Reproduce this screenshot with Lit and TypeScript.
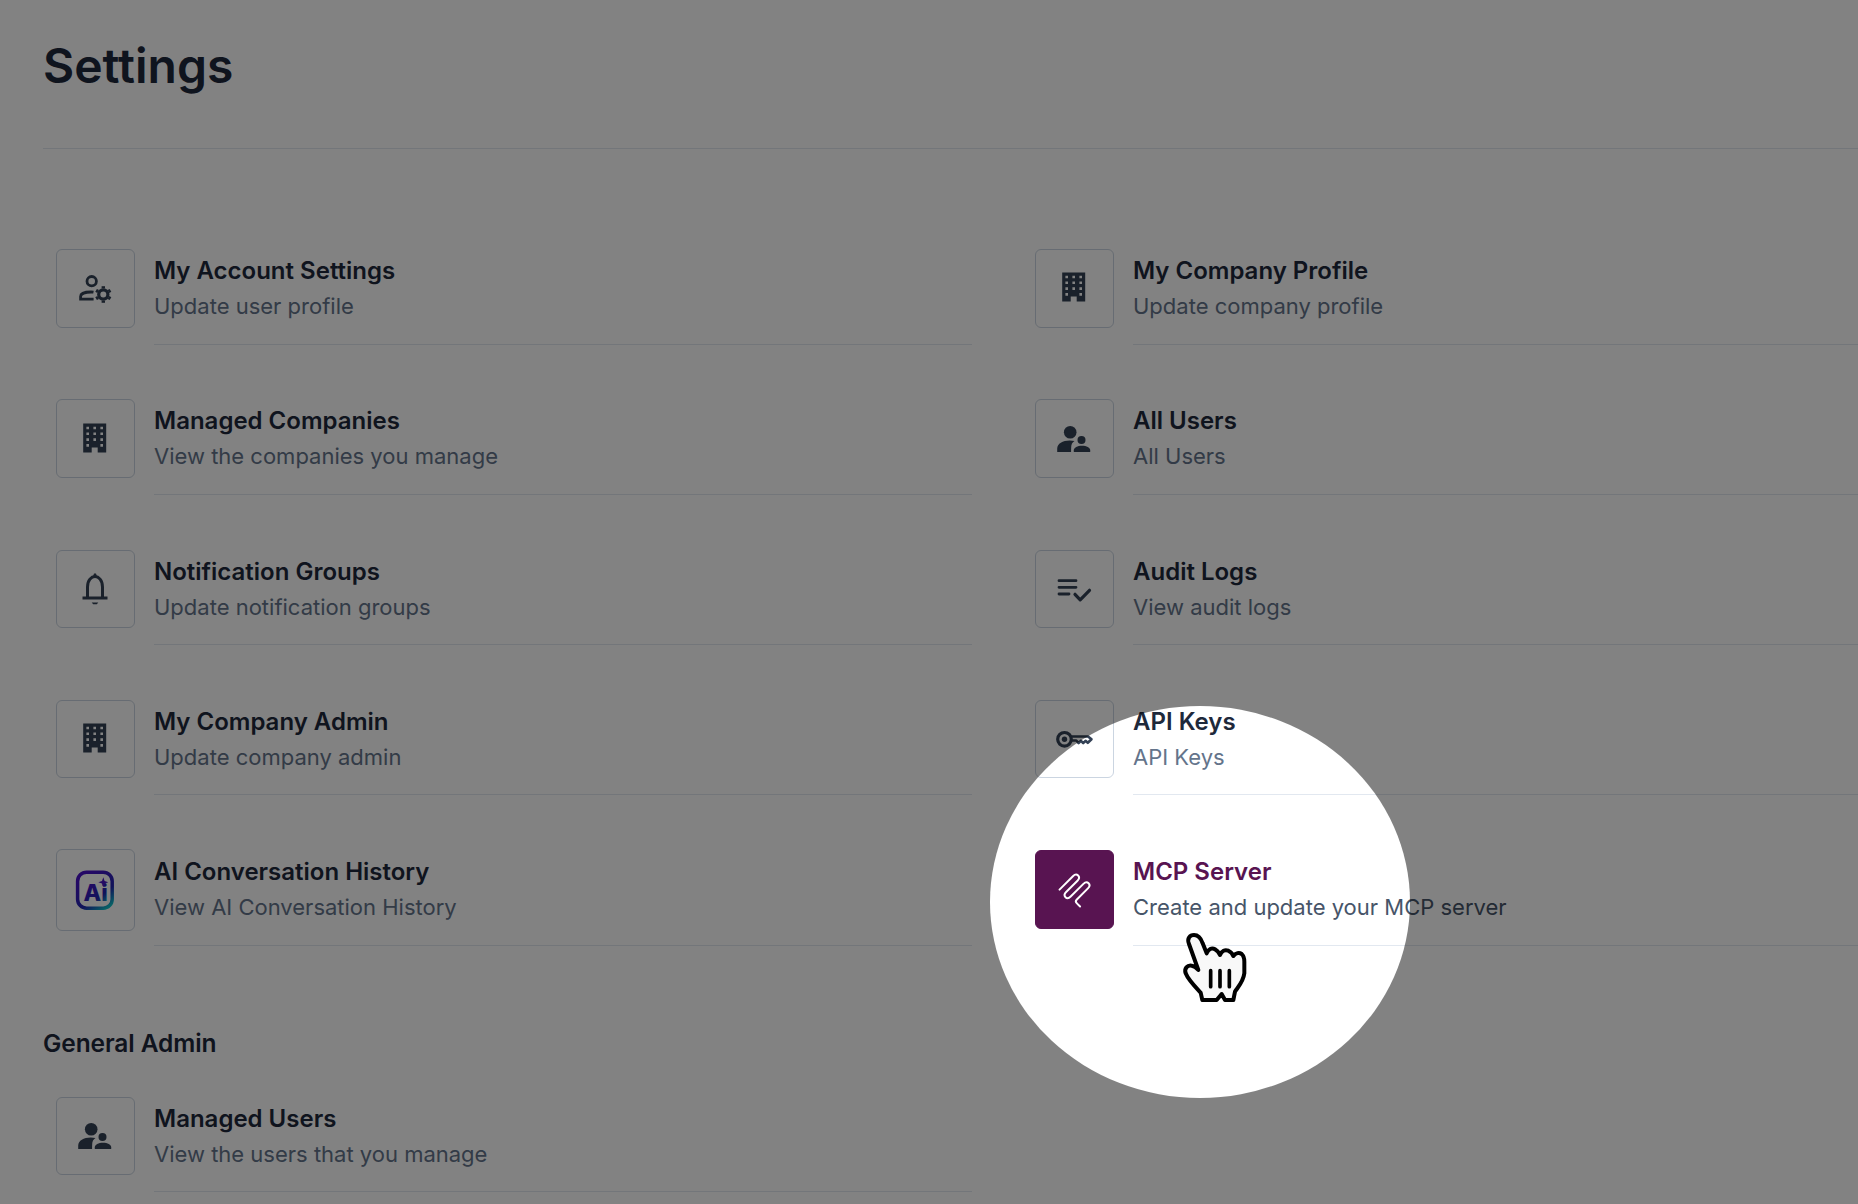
import { LitElement, html, css, svg } from "lit";
import { customElement } from "lit/decorators.js";

const ink = "#334155";

const gearTeeth = [0, 60, 120, 180, 240, 300];

const icons = {
  userGear: svg`
    <circle cx="16.700" cy="13.200" r="4.700" fill="none" stroke=${ink} stroke-width="2.800"/>
    <path d="M18.500 24.200c-1-.2-1.500-.2-2.500-.2-5.500 0-10.400 1.500-10.400 4.500v2.700h13" fill="none" stroke=${ink} stroke-width="2.800"/>
    <circle cx="28.300" cy="26.500" r="4.600" fill="none" stroke=${ink} stroke-width="3.200"/>
    ${gearTeeth.map(
      (a) => svg`<path d="M28.300 20.500v-2.300" stroke=${ink} stroke-width="3.400" transform="rotate(${a} 28.300 26.500)"/>`
    )}`,
  building: svg`
    <path fill-rule="evenodd" fill=${ink} d="M8.200 4.500h23v29h-8.500v-5h-6v5h-8.500zM11.400 7.700v2.600h2.600v-2.600zM18.400 7.700v2.600h2.600v-2.600zM25.400 7.700v2.600h2.600v-2.600zM11.400 13.500v2.600h2.600v-2.600zM18.400 13.500v2.600h2.600v-2.600zM25.400 13.500v2.600h2.600v-2.600zM11.400 19.300v2.600h2.600v-2.600zM18.400 19.300v2.600h2.600v-2.600zM25.400 19.300v2.600h2.600v-2.600zM11.400 25.100v2.600h2.600v-2.600zM25.400 25.100v2.600h2.600v-2.600z"/>`,
  users: svg`
    <circle cx="16.200" cy="13.300" r="6.300" fill=${ink}/>
    <path fill=${ink} d="M3.200 33v-3.500c0-5 5.500-8 12.500-8 1.800 0 3.400.2 4.800.6-2.300 1.500-3.200 3.500-3.300 5.900-.1 1.700-.1 3.300-.1 5z"/>
    <circle cx="27.500" cy="21" r="4" fill=${ink}/>
    <path fill=${ink} d="M19.800 33v-1.700c0-2.800 3.700-4.600 8.200-4.600s8.200 1.800 8.200 4.600v1.700z"/>`,
  list: svg`
    <g fill="none" stroke=${ink} stroke-linecap="round" stroke-linejoin="round">
      <path stroke-width="2.800" d="M5 11.700h17M5 18.300h17M5 25h10"/>
      <path stroke-width="3.200" d="M21 25.300l5.200 5.500 9.300-9.500"/>
    </g>`,
  bell: svg`
    <g fill="none" stroke=${ink} stroke-width="3">
      <path d="M12.500 29v-11c0-7 4-10.500 7.500-10.500s7.500 3.500 7.500 10.500v11"/>
      <path d="M7.500 29h25"/>
    </g>
    <path fill=${ink} d="M18 7.500l1-3h2l1 3zM16.700 33.500h6.600l-1.500 1.800h-3.600z"/>`,
  key: svg`
    <circle cx="10.500" cy="20.300" r="6.800" fill="none" stroke=${ink} stroke-width="3.200"/>
    <circle cx="10.500" cy="20.300" r="2.700" fill=${ink}/>
    <path fill="none" stroke=${ink} stroke-width="2.600" stroke-linejoin="round" d="M17.500 17.500h16.500l3.500 2.800-3.700 3.500-2.300-2-2.300 2.300-2.200-2.300-2.400 2.300-2.300-2.600h-4.800"/>`,
  mcp: svg`
    <path transform="rotate(-45 20 20)" fill="none" stroke="#fff" stroke-width="2" stroke-linecap="round" stroke-linejoin="round"
      d="M10 9.500L29 9.500C34.500 9.500 34.500 15.900 29 15.900L13 15.900C7.500 15.900 7.500 22.300 13 22.300L31 22.300C36.500 22.300 36.500 28.700 31 28.700L15 28.700C13 28.700 12.600 30 12.600 31.500L12.600 36"/>`,
};

const leftRows = [
  ["userGear", "My Account Settings", "Update user profile"],
  ["building", "Managed Companies", "View the companies you manage"],
  ["bell", "Notification Groups", "Update notification groups"],
  ["building", "My Company Admin", "Update company admin"],
  ["ai", "AI Conversation History", "View AI Conversation History"],
];

const rightRows = [
  ["building", "My Company Profile", "Update company profile"],
  ["users", "All Users", "All Users"],
  ["list", "Audit Logs", "View audit logs"],
  ["key", "API Keys", "API Keys"],
  ["mcp", "MCP Server", "Create and update your MCP server"],
];

@customElement("app-root")
export class AppRoot extends LitElement {
  static styles = css`
    :host {
      display: block;
      position: relative;
      width: 1858px;
      height: 1204px;
      overflow: hidden;
      background: #fff;
      font-family: Inter, "Liberation Sans", sans-serif;
    }

    .page {
      padding: 0 0 0 43px;
    }

    h1 {
      margin: 0;
      padding-top: 37px;
      height: 149px;
      box-sizing: border-box;
      border-bottom: 1px solid #e2e8f0;
      font-size: 48px;
      line-height: 58px;
      font-weight: 600;
      color: #1e293b;
    }

    .grid {
      display: grid;
      grid-template-columns: 916px 916px;
      column-gap: 63px;
      padding: 100px 0 0 13px;
    }

    .row {
      display: grid;
      grid-template-columns: 78.500px 1fr;
      column-gap: 19.500px;
      height: 150.330px;
    }

    .box {
      box-sizing: border-box;
      height: 78.500px;
      display: flex;
      align-items: center;
      justify-content: center;
      border: 1px solid #cbd5e1;
      border-radius: 6px;
    }

    .box svg {
      width: 40px;
      height: 40px;
    }

    .box.tall {
      height: 82px;
      margin-top: -1.500px;
    }

    .row.active .box {
      background: #581451;
      border-color: #581451;
    }

    .text {
      height: 95.500px;
      box-sizing: border-box;
      border-bottom: 1px solid #e2e8f0;
    }

    .name {
      font-size: 24px;
      line-height: 30px;
      font-weight: 600;
      color: #1e293b;
      margin-top: 7px;
    }

    .row.active .name {
      color: #581451;
    }

    .desc {
      font-size: 22px;
      line-height: 28px;
      color: #64748b;
      margin-top: 6px;
    }

    .row.active .desc {
      color: #475569;
    }

    h2 {
      margin: 0;
      font-size: 24.500px;
      line-height: 32px;
      font-weight: 600;
      letter-spacing: -0.1px;
      color: #1e293b;
      padding-top: 26px;
      height: 96px;
      box-sizing: border-box;
    }

    .single {
      padding-left: 13px;
      width: 916px;
    }

    .spot {
      position: absolute;
      left: 990px;
      top: 706px;
      width: 420px;
      height: 392px;
      border-radius: 50%;
      box-shadow: 0 0 0 2400px rgba(0, 0, 0, 0.49);
    }

    .hand {
      position: absolute;
      left: 1170px;
      top: 920px;
      width: 100px;
      height: 100px;
    }
  `;

  renderIcon(name: string) {
    if (name === "ai") {
      return html`<svg viewBox="0 0 40 40" aria-hidden="true">
        <defs>
          <linearGradient id="aig" x1="0.2" y1="0.05" x2="0.85" y2="1">
            <stop offset="0" stop-color="#4a10c8"/>
            <stop offset="0.65" stop-color="#2228b0"/>
            <stop offset="1" stop-color="#0fc0c8"/>
          </linearGradient>
        </defs>
        <rect x="2.600" y="2.200" width="34.600" height="36" rx="9" fill="none" stroke="url(#aig)" stroke-width="3.500"/>
        <text x="8.500" y="31.200" font-family="Inter, sans-serif" font-size="23" font-weight="800" fill="url(#aig)">Ai</text>
        <path d="M28.300 7.200l1.300 3.700 3.700 1.300-3.700 1.300-1.300 3.700-1.300-3.700-3.700-1.300 3.700-1.300z" fill="#4b16c4"/>
      </svg>`;
    }
    return html`<svg viewBox="0 0 40 40" aria-hidden="true">${icons[name as keyof typeof icons]}</svg>`;
  }

  renderRow(row: string[]) {
    const [icon, name, desc] = row;
    const active = icon === "mcp";
    return html`
      <div class="row ${active ? "active" : ""}">
        <div class="box ${icon === "ai" ? "tall" : ""}">${this.renderIcon(icon)}</div>
        <div class="text">
          <div class="name">${name}</div>
          <div class="desc">${desc}</div>
        </div>
      </div>
    `;
  }

  render() {
    return html`
      <div class="page">
        <h1>Settings</h1>
        <div class="grid">
          <div>${leftRows.map((r) => this.renderRow(r))}</div>
          <div>${rightRows.map((r) => this.renderRow(r))}</div>
        </div>
        <h2>General Admin</h2>
        <div class="single">
          ${this.renderRow(["users", "Managed Users", "View the users that you manage"])}
        </div>
      </div>
      <div class="spot"></div>
      <svg class="hand" viewBox="0 0 300 300" aria-hidden="true">
        <path fill="#f8f8f8" stroke="#000" stroke-width="12" stroke-linejoin="round"
          d="M97 240L92 218C75 200 55 180 47 160C42 145 52 135 65 137C72 138 78 142 85 150L57 72C50 55 60 45 72 45C85 45 93 55 98 70L110 100C115 88 125 82 135 88C142 92 147 98 150 105C155 92 165 88 175 92C183 96 188 102 190 108C197 98 208 97 215 102C222 108 223 115 223 125L223 160C220 185 205 200 195 215L190 240L165 240L155 222L140 240Z"/>
        <path fill="none" stroke="#000" stroke-width="11" stroke-linecap="round" d="M122 152V200M150 152V200M178 152V200"/>
      </svg>
    `;
  }
}
